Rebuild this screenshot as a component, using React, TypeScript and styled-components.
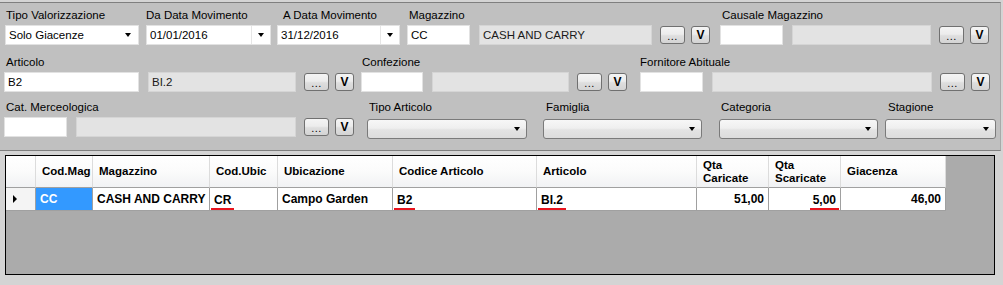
import styled, { createGlobalStyle } from 'styled-components';

const GlobalStyle = createGlobalStyle`
  html, body { margin: 0; padding: 0; }
  body {
    width: 1003px;
    height: 285px;
    overflow: hidden;
    background: #d4d4d4;
    font-family: "Liberation Sans", Arial, sans-serif;
    color: #000;
  }
`;

const Page = styled.div`
  padding-top: 2px;
`;

const FilterPanel = styled.div`
  box-sizing: border-box;
  width: 1001px;
  height: 149px;
  padding: 5px 0 0 4px;
  background: #c0c0c0;
  border-top: 1px solid #7f7f7f;
  border-right: 1px solid #a9a9a9;
  border-bottom: 1px solid #7f7f7f;
`;

const Row = styled.div<{ $top?: number }>`
  display: flex;
  align-items: flex-start;
  margin-top: ${p => p.$top ?? 0}px;
`;

const Field = styled.div<{ $ml?: number }>`
  display: flex;
  flex-direction: column;
  margin-left: ${p => p.$ml ?? 0}px;
`;

const Label = styled.div<{ $indent?: number }>`
  height: 15px;
  line-height: 15px;
  margin-bottom: 2px;
  padding-left: ${p => p.$indent ?? 2}px;
  font-size: 11.5px;
  white-space: nowrap;
`;

const Controls = styled.div`
  display: flex;
  align-items: center;
  height: 20px;
`;

const TextBox = styled.div<{ $w: number; $disabled?: boolean }>`
  box-sizing: border-box;
  width: ${p => p.$w}px;
  height: 20px;
  padding-left: 3px;
  line-height: 18px;
  font-size: 11.5px;
  white-space: nowrap;
  overflow: hidden;
  background: ${p => (p.$disabled ? '#e3e3e3' : '#fff')};
  border: 1px solid ${p => (p.$disabled ? '#d5d5d5' : '#e2e2e2')};
  color: ${p => (p.$disabled ? '#1a1a1a' : '#000')};
  & + & {
    margin-left: 9px;
  }
`;

const SmallButton = styled.div<{ $w: number; $ml: number }>`
  box-sizing: border-box;
  width: ${p => p.$w}px;
  height: 18px;
  margin-left: ${p => p.$ml}px;
  border: 1px solid #707070;
  border-radius: 3px;
  background: linear-gradient(#f4f4f4 0%, #ececec 45%, #dedede 55%, #d4d4d4 100%);
  display: flex;
  align-items: center;
  justify-content: center;
  font-size: 11px;
`;

const DotsText = styled.span`
  line-height: 1;
  margin-top: 3px;
  letter-spacing: 0.5px;
`;

const VText = styled.span`
  font-weight: bold;
  font-size: 12px;
  line-height: 1;
`;

const Arrow = styled.span`
  width: 0;
  height: 0;
  border-left: 3.5px solid transparent;
  border-right: 3.5px solid transparent;
  border-top: 4px solid #000;
`;

const FlatCombo = styled.div<{ $w: number }>`
  box-sizing: border-box;
  width: ${p => p.$w}px;
  height: 20px;
  display: flex;
  align-items: center;
  padding: 0 7px 0 3px;
  background: #fff;
  border: 1px solid #e2e2e2;
  font-size: 11.5px;
`;

const ComboText = styled.span`
  flex: 1;
  white-space: nowrap;
`;

const DateBox = styled.div<{ $w: number }>`
  box-sizing: border-box;
  width: ${p => p.$w}px;
  height: 20px;
  display: flex;
  align-items: center;
  padding-left: 3px;
  background: #fff;
  border: 1px solid #e2e2e2;
  font-size: 11.5px;
`;

const DateButton = styled.div`
  width: 18px;
  height: 18px;
  display: flex;
  align-items: center;
  justify-content: center;
  border-left: 1px solid #e6e6e6;
`;

const StyledCombo = styled.div<{ $w: number }>`
  box-sizing: border-box;
  width: ${p => p.$w}px;
  height: 20px;
  margin-top: 2px;
  display: flex;
  align-items: center;
  justify-content: flex-end;
  padding-right: 6px;
  border: 1px solid #7a7a7a;
  border-radius: 3px;
  background: linear-gradient(#f7f7f7 0%, #efefef 45%, #e3e3e3 55%, #dcdcdc 100%);
`;

const GridArea = styled.div`
  padding: 4px 0 0 5px;
`;

const GridBox = styled.div`
  box-sizing: border-box;
  width: 990px;
  height: 120px;
  border: 1px solid #000;
  background: #ababab;
`;

const Table = styled.div`
  display: grid;
  grid-template-columns: 30px 57px 117px 68px 115px 144px 160px 72px 72px 105px;
  width: max-content;
`;

const HeadCell = styled.div`
  box-sizing: border-box;
  height: 32px;
  display: flex;
  align-items: center;
  padding-left: 6px;
  background: linear-gradient(#ffffff 0%, #fbfbfb 50%, #f1f2f4 100%);
  border-right: 1px solid #dcdcdc;
  border-bottom: 1px solid #a0a0a0;
  font-size: 11.5px;
  font-weight: bold;
  line-height: 13px;
  white-space: pre;
  overflow: hidden;
`;

const Cell = styled.div<{ $right?: boolean; $selected?: boolean }>`
  box-sizing: border-box;
  height: 23px;
  display: flex;
  align-items: center;
  justify-content: ${p => (p.$right ? 'flex-end' : 'flex-start')};
  padding: 0 4px;
  background: ${p => (p.$selected ? '#3399ff' : '#fff')};
  color: ${p => (p.$selected ? '#fff' : '#000')};
  border-right: 1px solid #a0a0a0;
  border-bottom: 1px solid #a0a0a0;
  font-size: 12px;
  font-weight: bold;
  white-space: nowrap;
  overflow: hidden;
`;

const RowHeader = styled.div`
  box-sizing: border-box;
  height: 23px;
  display: flex;
  align-items: center;
  padding-left: 7px;
  background: #f4f4f4;
  border-right: 1px solid #a0a0a0;
  border-bottom: 1px solid #a0a0a0;
`;

const RowPointer = styled.span`
  width: 0;
  height: 0;
  border-left: 4px solid #000;
  border-top: 4px solid transparent;
  border-bottom: 4px solid transparent;
`;

const Marked = styled.span`
  margin: 6px -3px 0;
  padding: 0 3px 1px;
  line-height: 14px;
  border-bottom: 3px solid #e8141e;
`;

type LookupProps = { code: number; desc: number; codeText?: string; descText?: string };

function Lookup({ code, desc, codeText = '', descText = '' }: LookupProps) {
  return (
    <Controls>
      <TextBox $w={code}>{codeText}</TextBox>
      <TextBox $w={desc} $disabled>{descText}</TextBox>
      <SmallButton $w={25} $ml={8}><DotsText>...</DotsText></SmallButton>
      <SmallButton $w={19} $ml={6}><VText>V</VText></SmallButton>
    </Controls>
  );
}

function DatePicker({ w, value }: { w: number; value: string }) {
  return (
    <DateBox $w={w}>
      <ComboText>{value}</ComboText>
      <DateButton><Arrow /></DateButton>
    </DateBox>
  );
}

const headers = ['', 'Cod.Mag', 'Magazzino', 'Cod.Ubic', 'Ubicazione', 'Codice Articolo', 'Articolo', 'Qta\nCaricate', 'Qta\nScaricate', 'Giacenza'];

export default function App() {
  return (
    <Page>
      <GlobalStyle />
      <FilterPanel>
        <Row>
          <Field $ml={1}>
            <Label $indent={1}>Tipo Valorizzazione</Label>
            <FlatCombo $w={134}><ComboText>Solo Giacenze</ComboText><Arrow /></FlatCombo>
          </Field>
          <Field $ml={7}>
            <Label $indent={0}>Da Data Movimento</Label>
            <DatePicker w={125} value="01/01/2016" />
          </Field>
          <Field $ml={6}>
            <Label $indent={6}>A Data Movimento</Label>
            <DatePicker w={123} value="31/12/2016" />
          </Field>
          <Field $ml={7}>
            <Label>Magazzino</Label>
            <Lookup code={63} desc={173} codeText="CC" descText="CASH AND CARRY" />
          </Field>
          <Field $ml={10}>
            <Label>Causale Magazzino</Label>
            <Lookup code={63} desc={139} />
          </Field>
        </Row>
        <Row $top={10}>
          <Field>
            <Label>Articolo</Label>
            <Lookup code={135} desc={148} codeText="B2" descText="BI.2" />
          </Field>
          <Field $ml={7}>
            <Label $indent={1}>Confezione</Label>
            <Lookup code={62} desc={137} />
          </Field>
          <Field $ml={13}>
            <Label $indent={0}>Fornitore Abituale</Label>
            <Lookup code={63} desc={220} />
          </Field>
        </Row>
        <Row $top={8}>
          <Field>
            <Label>Cat. Merceologica</Label>
            <Lookup code={63} desc={220} />
          </Field>
          <Field $ml={13}>
            <Label>Tipo Articolo</Label>
            <StyledCombo $w={160}><Arrow /></StyledCombo>
          </Field>
          <Field $ml={16}>
            <Label $indent={3}>Famiglia</Label>
            <StyledCombo $w={159}><Arrow /></StyledCombo>
          </Field>
          <Field $ml={17}>
            <Label>Categoria</Label>
            <StyledCombo $w={159}><Arrow /></StyledCombo>
          </Field>
          <Field $ml={7}>
            <Label $indent={3}>Stagione</Label>
            <StyledCombo $w={111}><Arrow /></StyledCombo>
          </Field>
        </Row>
      </FilterPanel>
      <GridArea>
        <GridBox>
          <Table>
            {headers.map((h, i) => (
              <HeadCell key={i}>{h}</HeadCell>
            ))}
            <RowHeader><RowPointer /></RowHeader>
            <Cell $selected>CC</Cell>
            <Cell>CASH AND CARRY</Cell>
            <Cell><Marked>CR</Marked></Cell>
            <Cell>Campo Garden</Cell>
            <Cell><Marked>B2</Marked></Cell>
            <Cell><Marked>BI.2</Marked></Cell>
            <Cell $right>51,00</Cell>
            <Cell $right><Marked>5,00</Marked></Cell>
            <Cell $right>46,00</Cell>
          </Table>
        </GridBox>
      </GridArea>
    </Page>
  );
}
